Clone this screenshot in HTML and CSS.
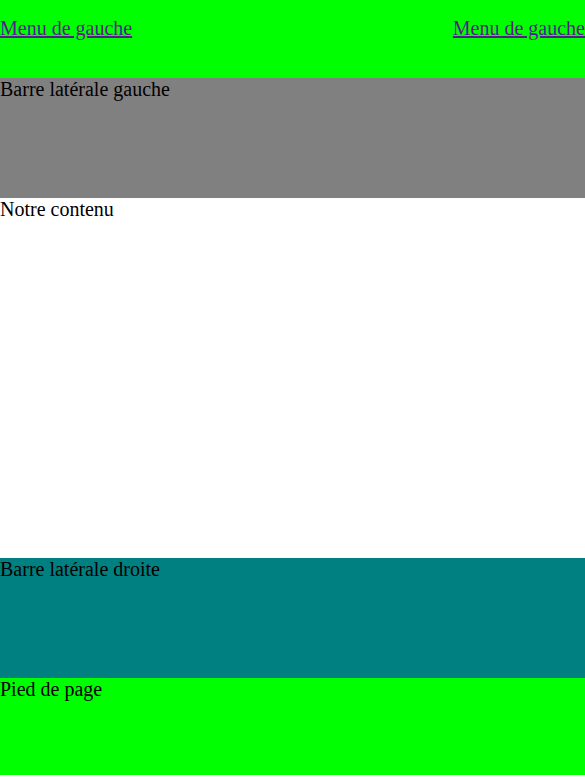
FILE: index.html
```html
<!DOCTYPE html>
<html lang="fr">
<head>
<meta charset="utf-8">
<title>Mise en page</title>
<link rel="stylesheet" href="styles.css">
</head>
<body>
<div class="page">
  <header class="header">
    <a class="menu-link" href="#">Menu de gauche</a>
    <a class="menu-link" href="#">Menu de gauche</a>
  </header>
  <aside class="sidebar-left">Barre latérale gauche</aside>
  <main class="content">Notre contenu</main>
  <aside class="sidebar-right">Barre latérale droite</aside>
  <footer class="footer">Pied de page</footer>
</div>
</body>
</html>
```
FILE: styles.css
```css
html, body {
  margin: 0;
  padding: 0;
  background: #ffffff;
}
body {
  font-family: "Liberation Serif", "Times New Roman", serif;
  font-size: 20px;
  line-height: 23px;
  color: #000000;
}
.page {
  display: flex;
  flex-direction: column;
}
.header {
  display: flex;
  justify-content: space-between;
  align-items: flex-start;
  height: 78px;
  box-sizing: border-box;
  padding-top: 17px;
  background: #00ff00;
}
.menu-link {
  color: #551a8b;
  text-decoration: underline;
}
.sidebar-left {
  height: 120px;
  background: #808080;
}
.content {
  height: 360px;
  background: #ffffff;
}
.sidebar-right {
  height: 120px;
  background: #008080;
}
.footer {
  height: 97px;
  background: #00ff00;
}
```
